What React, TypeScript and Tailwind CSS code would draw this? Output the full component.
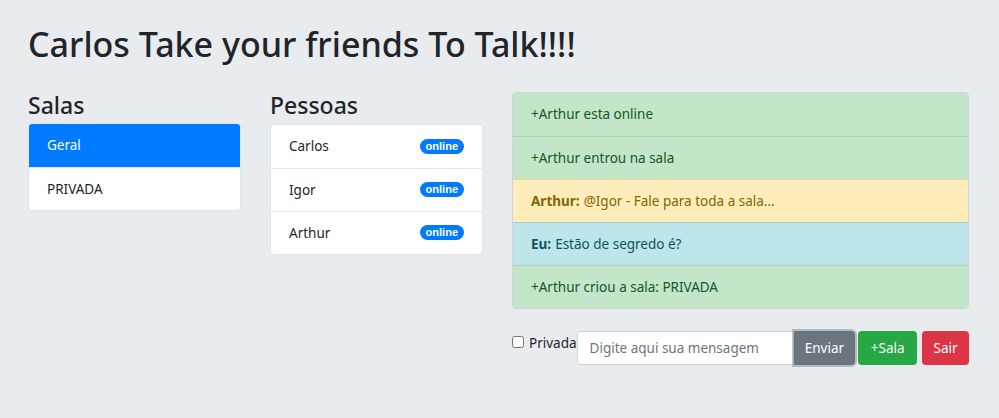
import React from "react";

const font = { fontFamily: '"Noto Sans", "Open Sans", sans-serif' };

const salas = [
  { name: "Geral", active: true },
  { name: "PRIVADA", active: false },
];

const pessoas = ["Carlos", "Igor", "Arthur"];

const mensagens = [
  { kind: "success", text: "+Arthur esta online" },
  { kind: "success", text: "+Arthur entrou na sala" },
  { kind: "warning", from: "Arthur:", text: "@Igor - Fale para toda a sala..." },
  { kind: "info", from: "Eu:", text: "Estão de segredo é?" },
  { kind: "success", text: "+Arthur criou a sala: PRIVADA" },
];

const tone: Record<string, string> = {
  success: "bg-[#c3e6cb] text-[#155724]",
  warning: "bg-[#ffeeba] text-[#856404]",
  info: "bg-[#bee5eb] text-[#0c5460]",
};

export default function App() {
  return (
    <div className="min-h-screen bg-[#e9ecef] text-[#212529] pl-[28px] pt-[21px]" style={font}>
      {/* Title */}
      <h1 className="text-[34px] leading-[46px] font-medium mb-[25px]">Carlos Take your friends To Talk!!!!</h1>

      <div className="grid grid-cols-[213px_213px_457px] gap-x-[29px] items-start">
        {/* Salas */}
        <div>
          <h3 className="text-[23px] leading-[26px] font-medium mb-[5px]">Salas</h3>
          <ul className="rounded-[4px] border border-black/10 bg-white overflow-hidden text-[13.5px]">
            {salas.map((s, i) => (
              <li
                key={s.name}
                className={`h-[43px] flex items-center px-[18px] ${i > 0 ? "border-t border-black/10" : ""} ${
                  s.active ? "bg-[#007bff] text-white" : ""
                }`}
              >
                {s.name}
              </li>
            ))}
          </ul>
        </div>

        {/* Pessoas */}
        <div>
          <h3 className="text-[23px] leading-[26px] font-medium mb-[6px]">Pessoas</h3>
          <ul className="rounded-[4px] border border-black/10 bg-white overflow-hidden text-[13.5px]">
            {pessoas.map((p, i) => (
              <li
                key={p}
                className={`h-[43px] flex items-center justify-between pl-[18px] pr-[18px] ${
                  i > 0 ? "border-t border-black/10" : ""
                }`}
              >
                <span>{p}</span>
                <span
                  className="bg-[#007bff] text-white text-[11px] font-bold leading-none px-[6px] py-[2px] rounded-full mt-[-1px]"
                  style={{ fontFamily: '"Liberation Sans", Arial, sans-serif' }}
                >
                  online
                </span>
              </li>
            ))}
          </ul>
        </div>

        {/* Chat */}
        <div>
          <ul className="rounded-[4px] border border-black/10 overflow-hidden text-[13.5px]">
            {mensagens.map((m, i) => (
              <li
                key={i}
                className={`h-[43px] flex items-center px-[18px] ${tone[m.kind]} ${
                  i > 0 ? "border-t border-black/10" : ""
                }`}
              >
                {m.from && <b className="font-bold mr-[4px]">{m.from}</b>}
                {m.text}
              </li>
            ))}
          </ul>

          <div className="flex items-start mt-[22px] text-[13.5px]">
            <label className="flex items-start gap-[5px] pt-[2px]">
              <input type="checkbox" className="w-[12px] h-[12px] mt-[3px]" />
              <span>Privada</span>
            </label>
            <input
              className="w-[217px] h-[34px] bg-white border border-[#ced4da] rounded-l-[3px] px-[12px] text-[13.5px] placeholder:text-[#6c757d] outline-none"
              placeholder="Digite aqui sua mensagem"
              style={font}
            />
            <button className="h-[34px] w-[62px] bg-[#6c757d] text-white rounded-r-[4px] shadow-[0_0_0_2px_rgba(130,138,145,0.5)]">
              Enviar
            </button>
            <button className="h-[34px] w-[59px] ml-[3px] bg-[#28a745] text-white rounded-[4px]">+Sala</button>
            <button className="h-[34px] w-[47px] ml-[5px] bg-[#dc3545] text-white rounded-[4px]">Sair</button>
          </div>
        </div>
      </div>
    </div>
  );
}
